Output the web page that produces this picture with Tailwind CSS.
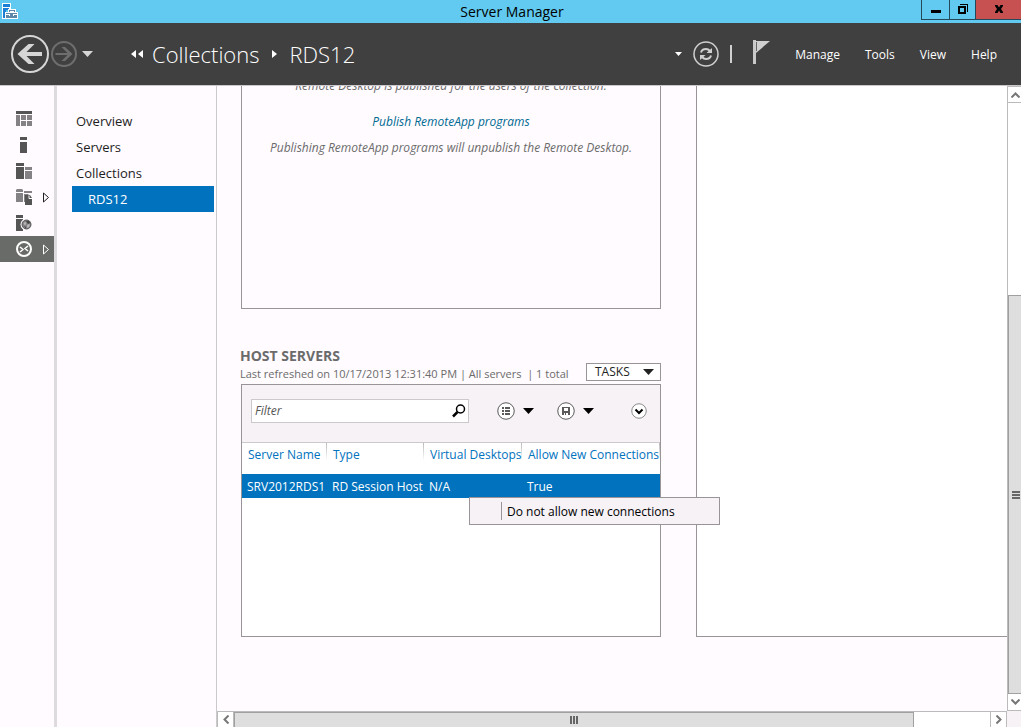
<!doctype html>
<html lang="en">
  <head>
    <meta charset="utf-8" />
    <meta name="viewport" content="width=device-width, initial-scale=1" />
    <title>Server Manager</title>
    <script src="https://cdn.jsdelivr.net/npm/@tailwindcss/browser@4"></script>
  </head>
  <body
    class="h-screen flex flex-col overflow-hidden bg-[#fffbff] font-['Open_Sans','Noto_Sans',sans-serif] text-xs text-[#1e1e1e]"
  >
    <!-- Title bar -->
    <div class="relative h-[23px] shrink-0 bg-[#62caf0] flex items-start">
      <svg class="absolute left-0.5 top-[3px]" width="16" height="16" shape-rendering="crispEdges">
        <path d="M0 0h9v7h-5v9H0z" fill="#fff" />
        <path d="M1 1h7v3H1zM1 5h6v2H4v8H1z" fill="#1b80d4" />
        <path d="M3 9h3V6h8v3h2v7H3z" fill="#fff" />
        <path d="M4 10h11v5H4zM7 7h6v2H7z" fill="#5f87a8" />
        <path d="M8 8h4v1H8zM4 11h3v1H4zM12 11h3v1h-3zM7 11h1v2H7zM11 11h1v2h-1z" fill="#fff" />
      </svg>
      <h1 class="flex-1 pl-[103px] text-center text-sm leading-6 text-black">Server Manager</h1>
      <div class="flex h-5 border-b border-l border-[#23495a]">
        <button class="w-7 border-r border-[#23495a] flex justify-center" aria-label="Minimize">
          <svg width="12" height="19"><path d="M1 10h10v3H1z" /></svg>
        </button>
        <button class="w-[26px] border-r border-[#23495a] flex justify-center" aria-label="Restore">
          <svg width="12" height="19" fill="none" stroke="#000" shape-rendering="crispEdges">
            <path d="M3 4.5h7.5V12" />
            <path d="M2 7h6v6H2z" stroke-width="2" />
          </svg>
        </button>
        <button class="w-[45px] bg-[#c75050] flex justify-center" aria-label="Close">
          <svg width="12" height="19"><path d="M2 5h2.500l1.500 2.500L7.500 5H10v1L8 9l2 3v1H7.500L6 10.500 4.500 13H2v-1l2-3-2-3z" /></svg>
        </button>
      </div>
    </div>

    <!-- Navigation header -->
    <header class="h-[63px] shrink-0 bg-[#404040] border-b border-[#cbc7cb] flex items-center text-white">
      <button class="ml-2.5" aria-label="Back">
        <svg width="40" height="40" fill="none" stroke="#d6d6d6">
          <circle cx="20" cy="20" r="18" stroke-width="2" />
          <path d="M32 20H11" stroke-width="4" />
          <path d="M7.500 20L18.500 10H24.500L14.500 20 24.500 30H18.500z" fill="#d6d6d6" stroke="none" />
        </svg>
      </button>
      <button aria-label="Forward">
        <svg width="28" height="40" fill="none" stroke="#6e6e6e">
          <circle cx="14" cy="20" r="12" stroke-width="2" />
          <path d="M5.500 20h14" stroke-width="2" />
          <path d="M22.500 20L15 13h-3.500l7 7-7 7H15z" fill="#6e6e6e" stroke="none" />
        </svg>
      </button>
      <button class="ml-1" aria-label="History">
        <svg width="12" height="8"><path d="M0 1h11L5.500 7z" fill="#d6d6d6" /></svg>
      </button>
      <nav class="ml-9 flex items-center flex-1 text-[22px] font-light whitespace-nowrap">
        <svg width="14" height="10"><path d="M6 1v8L1 5zM13 1v8L8 5z" fill="#fff" /></svg>
        <a href="#" class="ml-2 pt-0.5">Collections</a>
        <svg class="mx-3" width="6" height="10"><path d="M0 1v8l5-4z" fill="#fff" /></svg>
        <a href="#" class="pt-0.5">RDS12</a>
      </nav>
      <button aria-label="Refresh options">
        <svg width="8" height="6"><path d="M0 1h7L3.500 5z" fill="#fff" /></svg>
      </button>
      <button class="ml-2.5" aria-label="Refresh">
        <svg width="26" height="26" fill="none" stroke="#d0d0d0">
          <circle cx="13" cy="13" r="12" stroke-width="1.500" />
          <path d="M8 11.500c.5-2 2.500-3.500 5-3.500 1.800 0 3 .8 4 2M18 14.500c-.5 2-2.500 3.500-5 3.500-1.800 0-3-.8-4-2" stroke-width="2" />
          <path d="M19 7v5h-5.500zM7 19v-5h5.500z" fill="#d0d0d0" stroke="none" />
        </svg>
      </button>
      <div class="ml-[11px] w-0.5 h-[18px] bg-[#d0d0d0]"></div>
      <button class="ml-5" aria-label="Notifications">
        <svg width="18" height="32">
          <path d="M1 2h3v24H1z" fill="#c9c9c9" />
          <path d="M3 3h15L4 15z" fill="#d0d0d0" />
          <path d="M4.500 4v9" stroke="#666" />
        </svg>
      </button>
      <div class="ml-[25px] mr-6 pt-0.5 flex gap-[25px]">
        <button>Manage</button>
        <button>Tools</button>
        <button>View</button>
        <button>Help</button>
      </div>
    </header>

    <div class="flex-1 min-h-0 flex">
      <!-- Icon rail -->
      <nav class="w-[57px] shrink-0 border-r-[3px] border-[#dedbde] pt-5">
        <a href="#" class="flex h-[26px] items-center pl-4" aria-label="Dashboard">
          <svg width="16" height="16" shape-rendering="crispEdges">
            <path d="M0 0h16v3H0z" fill="#555" />
            <path d="M0 4h4v11H0zM5 4h5v5H5zM11 4h5v5h-5zM5 10h5v5H5zM11 10h5v5h-5z" fill="#858285" />
          </svg>
        </a>
        <a href="#" class="flex h-[26px] items-center pl-4" aria-label="Local Server">
          <svg width="16" height="16" shape-rendering="crispEdges">
            <path d="M4 0h7v3H4zM4 5h7v11H4z" fill="#555" />
          </svg>
        </a>
        <a href="#" class="flex h-[26px] items-center pl-4" aria-label="All Servers">
          <svg width="16" height="16" shape-rendering="crispEdges">
            <path d="M0 0h8v3H0zM0 4h8v12H0z" fill="#555" />
            <path d="M9 4h7v3H9zM9 8h7v8H9z" fill="#858285" />
          </svg>
        </a>
        <a href="#" class="flex h-[26px] items-center pl-4" aria-label="File and Storage Services">
          <svg width="16" height="16">
            <path d="M0 1l1-1h5l1 1v2H0zM8 2h8v2H8zM0 4h7v9H0zM8 5h5l-1 1H9v7H8z" fill="#858285" />
            <path d="M9 6h5l2 3v7H9z" fill="#555" />
            <path d="M13 6.500v3h3" stroke="#fff" fill="none" />
          </svg>
          <svg class="ml-[11px]" width="7" height="11" fill="none" stroke="#222"><path d="M.5 1v9L5.500 5.500z" /></svg>
        </a>
        <a href="#" class="flex h-[26px] items-center pl-4" aria-label="IIS">
          <svg width="16" height="16">
            <path d="M0 0h7v3H0zM0 4h7v12H0z" fill="#555" />
            <circle cx="10.500" cy="9.500" r="6" fill="#fffbff" />
            <circle cx="10.500" cy="9.500" r="4.500" fill="#858285" stroke="#555" />
            <path d="M7.500 8l2-1 1 1-1 2h-1zM11 10l2-1 1 1-1 2-2 1z" fill="#b8b5b8" />
            <path d="M10 6h3l1 2-2 1zM8 11l2 1v2z" fill="#444" />
          </svg>
        </a>
        <a href="#" class="flex h-[26px] items-center pl-4 bg-[#686b67]" aria-label="Remote Desktop Services">
          <svg width="16" height="16" fill="none" stroke="#fff">
            <circle cx="8" cy="8" r="7" stroke-width="2" />
            <path d="M4 6l3 2.500L4 11M12 5L9 7.500l3 2.500" stroke-width="1.500" />
          </svg>
          <svg class="ml-[11px]" width="7" height="11" fill="none" stroke="#fff"><path d="M.5 1v9L5.500 5.500z" /></svg>
        </a>
      </nav>

      <!-- Section list -->
      <nav class="w-40 shrink-0 border-r border-[#cbc9cb] pt-[22px] pl-[15px] pr-0.5 text-[13px] leading-[26px]">
        <a href="#" class="block pl-1">Overview</a>
        <a href="#" class="block pl-1">Servers</a>
        <a href="#" class="block pl-1">Collections</a>
        <a href="#" class="block pl-4 bg-[#0072be] text-white">RDS12</a>
      </nav>

      <div class="flex-1 min-w-0 flex flex-col">
        <div class="flex-1 min-h-0 flex">
          <main class="flex-1 min-w-0 overflow-hidden grid grid-cols-[420px_1fr] gap-x-[35px] pl-6 pb-[74px]">
            <div class="flex flex-col min-h-0">
              <section
                class="h-[223px] shrink-0 overflow-hidden border border-t-0 border-[#989498] text-center italic text-[#6b6b6b]"
              >
                <p class="-mt-2.5 leading-5">Remote Desktop is published for the users of the collection.</p>
                <p class="mt-4 leading-5"><a href="#" class="text-[#006a92]">Publish RemoteApp programs</a></p>
                <p class="mt-1.5 leading-5">Publishing RemoteApp programs will unpublish the Remote Desktop.</p>
              </section>

              <section class="mt-[38px] flex-1 flex flex-col">
                <div class="-ml-px flex items-end justify-between text-[#6b6b6b]">
                  <div>
                    <h2 class="text-sm leading-[18px] font-bold">HOST SERVERS</h2>
                    <p class="text-[11px] leading-[18px] whitespace-pre">Last refreshed on 10/17/2013 12:31:40 PM | All servers  | 1 total</p>
                  </div>
                  <button class="mb-0.5 h-[18px] w-[75px] shrink-0 pl-2 pr-1.5 border border-[#989498] bg-white flex items-center justify-between text-[#222]">
                    TASKS
                    <svg width="11" height="6"><path d="M0 0h11L5.500 6z" fill="#222" /></svg>
                  </button>
                </div>

                <div class="flex-1 mt-px border border-[#989498] bg-white">
                  <div class="h-[57px] bg-[#f6f2f6] flex items-start pt-3.5 pl-[9px] pr-[13px]">
                    <label class="flex items-center w-[218px] h-6 border border-[#cbc9cb] bg-white">
                      <input
                        type="text"
                        placeholder="Filter"
                        aria-label="Filter"
                        class="flex-1 min-w-0 pl-[3px] italic outline-none placeholder:text-[#555]"
                      />
                      <svg class="mr-0.5" width="14" height="14" fill="none" stroke="#000">
                        <circle cx="8.500" cy="5" r="4" stroke-width="1.500" />
                        <path d="M5.500 8L1 12.500" stroke-width="2.500" />
                      </svg>
                    </label>
                    <div class="flex flex-1 items-center h-6 pl-7">
                      <button class="flex items-center gap-2" aria-label="View options">
                        <svg width="18" height="18" fill="none" stroke="#5a5a5a">
                          <circle cx="9" cy="9" r="8.250" fill="#fff" stroke-width="1" />
                          <path d="M5 6h2M8 6h5M5 9h2M8 9h5M5 12h2M8 12h5" stroke-width="2" shape-rendering="crispEdges" />
                        </svg>
                        <svg width="12" height="6"><path d="M0 0h11L5.500 6z" /></svg>
                      </button>
                      <button class="ml-[22px] flex items-center gap-2" aria-label="Saved queries">
                        <svg width="18" height="18" shape-rendering="auto">
                          <circle cx="9" cy="9" r="8.250" fill="#fff" stroke="#5a5a5a" />
                          <path d="M5 5h8v8H5z" fill="#5a5a5a" />
                          <path d="M7 6h4v3H7zM7 11h1v2H7zM9 11h2v2H9z" fill="#fff" />
                        </svg>
                        <svg width="12" height="6"><path d="M0 0h11L5.500 6z" /></svg>
                      </button>
                      <button class="ml-auto" aria-label="Expand">
                        <svg width="16" height="16" fill="none">
                          <circle cx="8" cy="8" r="7.250" fill="#fff" stroke="#8a8a8a" />
                          <path d="M4.500 6.500L8 10l3.500-3.500" stroke="#000" stroke-width="2" />
                        </svg>
                      </button>
                    </div>
                  </div>

                  <div class="relative border-t border-[#cbc9cb]">
                    <table class="w-full table-fixed text-left whitespace-nowrap">
                      <thead>
                        <tr class="h-[31px] align-top text-[#0072be] leading-6">
                          <th class="w-[85px] pl-1.5 font-normal bg-linear-to-b from-[#bbb] to-white bg-[length:1px_18px] bg-no-repeat bg-right-top">Server Name</th>
                          <th class="w-[97px] pl-1.5 font-normal bg-linear-to-b from-[#bbb] to-white bg-[length:1px_18px] bg-no-repeat bg-right-top">Type</th>
                          <th class="w-[98px] pl-1.5 font-normal bg-linear-to-b from-[#bbb] to-white bg-[length:1px_18px] bg-no-repeat bg-right-top">Virtual Desktops</th>
                          <th class="pl-1.5 font-normal bg-linear-to-b from-[#bbb] to-white bg-[length:1px_18px] bg-no-repeat bg-right-top">Allow New Connections</th>
                        </tr>
                      </thead>
                      <tbody>
                        <tr class="h-6 bg-[#0072be] text-white">
                          <td class="pl-[5px] pt-0.5">SRV2012RDS1</td>
                          <td class="pl-[5px] pt-0.5">RD Session Host</td>
                          <td class="pl-[5px] pt-0.5">N/A</td>
                          <td class="pl-[5px] pt-0.5">True</td>
                        </tr>
                      </tbody>
                    </table>

                    <!-- Context menu -->
                    <div
                      role="menu"
                      class="absolute z-10 left-[227px] top-[54px] w-[251px] h-7 py-1 pl-[31px] border border-[#989498] bg-[#f6f2f6] text-black"
                    >
                      <button role="menuitem" class="h-full w-full pl-[5px] pt-0.5 border-l border-[#989498] text-left flex items-center">
                        Do not allow new connections
                      </button>
                    </div>
                  </div>
                </div>
              </section>
            </div>

            <section class="border-l border-b border-[#989498] bg-white"></section>
          </main>

          <!-- Vertical scrollbar -->
          <div class="w-3.5 shrink-0 overflow-hidden flex flex-col border-l border-[#bbb] bg-white">
            <button class="h-[17px] shrink-0 border-y border-[#bbb] pl-[3px]" aria-label="Scroll up">
              <svg width="9" height="6" fill="none" stroke="#777" stroke-width="2"><path d="M.5 5.500l4-4 4 4" /></svg>
            </button>
            <div class="grow-193 basis-0"></div>
            <div class="grow-398 basis-0 border border-r-0 border-[#a0a0a0] bg-[#dedede] flex flex-col justify-center gap-px pl-[3px]">
              <div class="w-2 h-0.5 bg-[#666]"></div>
              <div class="w-2 h-0.5 bg-[#666]"></div>
              <div class="w-2 h-0.5 bg-[#666]"></div>
            </div>
            <button class="h-[17px] shrink-0 border-b border-[#bbb] pl-[3px]" aria-label="Scroll down">
              <svg width="9" height="6" fill="none" stroke="#777" stroke-width="2"><path d="M.5.5l4 4 4-4" /></svg>
            </button>
          </div>
        </div>

        <!-- Horizontal scrollbar -->
        <div class="h-4 shrink-0 flex bg-[#f6f2f6]">
          <div class="flex-1 overflow-hidden flex border-t border-r border-[#bbb] bg-white">
            <button class="w-[17px] shrink-0 flex items-center justify-center border-x border-[#bbb]" aria-label="Scroll left">
              <svg width="6" height="9" fill="none" stroke="#777" stroke-width="2"><path d="M5.500.5l-4 4 4 4" /></svg>
            </button>
            <div class="grow-680 basis-0 border border-b-0 border-[#a0a0a0] bg-[#dedede] flex items-center justify-center gap-px">
              <div class="w-0.5 h-2 bg-[#666]"></div>
              <div class="w-0.5 h-2 bg-[#666]"></div>
              <div class="w-0.5 h-2 bg-[#666]"></div>
            </div>
            <div class="grow-76 basis-0"></div>
            <button class="w-4 shrink-0 flex items-center justify-center border-l border-[#bbb]" aria-label="Scroll right">
              <svg width="6" height="9" fill="none" stroke="#777" stroke-width="2"><path d="M.5.5l4 4-4 4" /></svg>
            </button>
          </div>
          <div class="w-3.5 shrink-0"></div>
        </div>
      </div>
    </div>
  </body>
</html>
